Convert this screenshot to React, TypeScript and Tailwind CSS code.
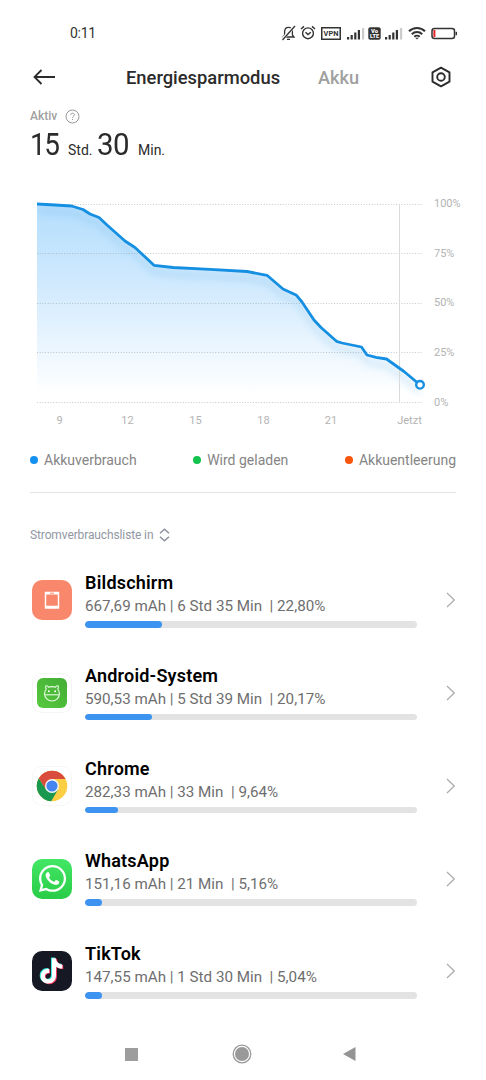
import React from "react";
import { FaWhatsapp } from "react-icons/fa";

const POINTS =
  "37,204 55,205 71.5,206 83,209.5 90,214 99,217.5 107,225 125,241 135,247.5 154,265.3 173,267.5 210,269.3 247,271.5 267,275.3 283,289 296.5,295.3 302,302 314,320 321,327.5 336.5,341.3 342,343 361.5,347 367,355 376,357.3 386.5,359 404,371.5 416,381.5 420,385";

function Signal() {
  return (
    <svg className="h-[13px] w-[18px]" viewBox="0 0 18 13" fill="#333">
      <rect x="0" y="10" width="2.2" height="2.5" />
      <rect x="3.6" y="8" width="2.2" height="4.5" />
      <rect x="7.2" y="5.5" width="2.2" height="7" />
      <rect x="10.8" y="3" width="2.2" height="9.5" />
      <rect x="15" y="1" width="2.2" height="11.5" fill="#ccc" />
    </svg>
  );
}

function StatusBar() {
  return (
    <div className="flex h-[50px] items-center pt-4 pl-[70px]">
      <span className="w-[211px] text-[14px] tracking-[-0.3px] text-[#333]">0:11</span>
      <svg className="h-4 w-[15px]" viewBox="0 0 15 16" fill="none" stroke="#333" strokeWidth="1.3">
        <path d="M2 12h11l-1.6-2V6.8C11.4 4 9.8 2.3 7.5 2.3S3.6 4 3.6 6.8V10zM6 14.3h3" />
        <path d="M13.5 1L1 15" stroke="#fff" strokeWidth="3" />
        <path d="M14 1L1.5 15" />
      </svg>
      <svg className="ml-[4px] h-4 w-4" viewBox="0 0 16 16" fill="none" stroke="#333" strokeWidth="1.4">
        <circle cx="8" cy="8.3" r="5.4" />
        <path d="M1 4L4 1.4M15 4l-3-2.6M5.5 7.2L8 9.6l2.8-2.4" />
      </svg>
      <svg className="ml-[5px] h-[13px] w-5" viewBox="0 0 20 13">
        <rect x="0.75" y="0.75" width="18.5" height="11.5" fill="none" stroke="#333" strokeWidth="1.5" />
        <text x="10" y="9.2" fontSize="7.4" fontWeight="700" fill="#333" textAnchor="middle">VPN</text>
      </svg>
      <span className="ml-[6px]"><Signal /></span>
      <svg className="ml-[3px] h-[13px] w-[13px]" viewBox="0 0 13 13">
        <rect x="0.3" y="0.3" width="12.4" height="12.4" rx="2" fill="#333" />
        <text x="6.5" y="6" fontSize="5.8" fontWeight="900" fill="#fff" textAnchor="middle">Vo</text>
        <text x="6.5" y="11.4" fontSize="5.5" fontWeight="900" fill="#fff" textAnchor="middle">LTE</text>
      </svg>
      <span className="ml-[4px]"><Signal /></span>
      <svg className="ml-[5px] h-[14px] w-[18px]" viewBox="0 0 18 14" fill="none" stroke="#333" strokeWidth="2">
        <path d="M1 5.3a11.4 11.4 0 0 1 16 0M3.8 8.2a7.4 7.4 0 0 1 10.4 0M6.3 10.8a3.9 3.9 0 0 1 5.4 0" />
        <path d="M7.2 11.8h3.6L9 13.6z" fill="#333" stroke="none" />
      </svg>
      <svg className="ml-[5px] h-[13px] w-[27px]" viewBox="0 0 27 13" fill="none">
        <rect x="1" y="1.5" width="22.5" height="10" rx="2.5" stroke="#333" strokeWidth="1.5" />
        <rect x="2.4" y="3" width="2" height="7" fill="#e5252a" />
        <path d="M25.3 4.8v3.4" stroke="#333" strokeWidth="1.5" />
      </svg>
    </div>
  );
}

function Header() {
  return (
    <div className="flex h-[54px] items-center pl-[33px]">
      <svg className="h-4 w-[23px]" viewBox="0 0 23 16" fill="none" stroke="#2b2b2b" strokeWidth="1.8">
        <path d="M22 8H2M8.5 1L1.5 8l7 7" />
      </svg>
      <span className="ml-[70px] w-[192px] pt-[2px] text-[18.35px] font-medium whitespace-nowrap text-[#2b2b2b]">
        Energiesparmodus
      </span>
      <span className="w-[112px] pt-[2px] text-[18.2px] font-medium text-[#a0a0a0]">Akku</span>
      <svg className="h-[22px] w-[22px]" viewBox="0 0 22 22" fill="none" stroke="#2b2b2b" strokeWidth="1.9">
        <path d="M11 1.6l8.5 4.7v9.4L11 20.4l-8.5-4.7V6.3z" strokeLinejoin="round" />
        <circle cx="11" cy="11" r="3.8" />
      </svg>
    </div>
  );
}

function Chart() {
  const rows: [number, string][] = [
    [204, "100%"],
    [253.5, "75%"],
    [303, "50%"],
    [352.5, "25%"],
    [402.5, "0%"],
  ];
  const hours: [number, string][] = [
    [59.5, "9"],
    [127.5, "12"],
    [195.5, "15"],
    [263.5, "18"],
    [331, "21"],
    [409.5, "Jetzt"],
  ];
  return (
    <svg className="mt-[26px] h-[240px] w-[486px] shrink-0" viewBox="0 190 486 240">
      <defs>
        <linearGradient id="area" x1="0" y1="204" x2="0" y2="395" gradientUnits="userSpaceOnUse">
          <stop offset="0" stopColor="#b4defd" />
          <stop offset="0.4" stopColor="#cfe9fe" />
          <stop offset="1" stopColor="#ffffff" />
        </linearGradient>
        <filter id="soft" x="-10%" y="-10%" width="120%" height="130%">
          <feGaussianBlur stdDeviation="3" />
        </filter>
        <clipPath id="under">
          <polygon points={`${POINTS} 430,402 37,402`} />
        </clipPath>
      </defs>
      <polygon points={`${POINTS} 420,395 37,395`} fill="url(#area)" />
      <g clipPath="url(#under)">
        <polyline points={POINTS} transform="translate(0 7)" fill="none" stroke="#4a9fd8" strokeOpacity="0.16" strokeWidth="6" filter="url(#soft)" />
      </g>
      {rows.map(([y, label]) => (
        <g key={label}>
          <path d={`M37 ${Math.floor(y) + 0.5}H422`} stroke="#8c969e" strokeOpacity="0.5" strokeDasharray="1 1.7" />
          <text x="434" y={y + 3} fontSize="11" fill="#b3b3b3">{label}</text>
        </g>
      ))}
      <path d="M399.5 204V403" stroke="#dadada" />
      {hours.map(([x, label]) => (
        <text key={label} x={x} y="423.5" fontSize="11" fill="#b3b3b3" textAnchor="middle">{label}</text>
      ))}
      <polyline points={POINTS} fill="none" stroke="#158fe2" strokeWidth="2.8" strokeLinejoin="round" />
      <circle cx="420" cy="384.8" r="3.8" fill="#fff" stroke="#158fe2" strokeWidth="2.4" />
    </svg>
  );
}

function ScreenIcon() {
  return (
    <svg className="h-10 w-10" viewBox="0 0 40 40">
      <rect width="40" height="40" rx="10" fill="#f9876c" />
      <path d="M12.8 11.8h14.4v17H12.8zM14.2 14.6v11.2h11.6V14.6z" fill="#fff" fillRule="evenodd" />
      <path d="M18 13.2h4" stroke="#f9876c" strokeWidth="1" />
    </svg>
  );
}

function AndroidIcon() {
  return (
    <svg className="h-10 w-10" viewBox="0 0 40 40">
      <defs>
        <linearGradient id="leaf" x1="1" y1="0" x2="0" y2="1">
          <stop offset="0" stopColor="#43ad35" />
          <stop offset="1" stopColor="#57c93e" />
        </linearGradient>
      </defs>
      <rect x="0.5" y="0.5" width="39" height="39" rx="9.5" fill="#fff" stroke="#f5f5f5" />
      <rect x="5" y="5" width="30" height="30" rx="6" fill="url(#leaf)" />
      <g fill="none" stroke="#e9fbe5" strokeWidth="1.1" strokeLinejoin="round">
        <path d="M14.3 16c-1-1.6-.8-2.9-.1-3.2.9-.3 1.9.5 2.3 1.5 2-.8 5-.8 7 0 .4-1 1.4-1.8 2.3-1.5.7.3.9 1.6-.1 3.2 1.1 1.2 1.7 2.9 1.7 4.7 0 4.2-3.3 7.3-7.4 7.3s-7.4-3.1-7.4-7.3c0-1.8.6-3.5 1.7-4.7z" />
        <path d="M12.6 21.8h14.8" />
      </g>
      <circle cx="16.8" cy="18.3" r="1" fill="#fff" />
      <circle cx="23.2" cy="18.3" r="1" fill="#fff" />
    </svg>
  );
}

function ChromeIcon() {
  return (
    <svg className="h-10 w-10" viewBox="0 0 40 40">
      <rect x="0.5" y="0.5" width="39" height="39" rx="9.5" fill="#fff" stroke="#f7f7f7" />
      <circle cx="20" cy="20" r="15.3" fill="#fbce43" />
      <path d="M20 20L20 13H33.6A15.3 15.3 0 0 0 6.75 12.35L13.9 23.5z" fill="#d94b3d" />
      <path d="M6.75 12.35A15.3 15.3 0 0 0 19.2 35.3L26.1 23.5L20 20L13.9 23.5z" fill="#1a9850" />
      <circle cx="20" cy="20" r="7" fill="#f6f9fc" />
      <circle cx="20" cy="20" r="5.6" fill="#4684ef" />
    </svg>
  );
}

function WhatsAppIcon() {
  return (
    <div className="flex h-10 w-10 items-center justify-center rounded-[10px] bg-linear-to-b from-[#42e765] to-[#28cc46]">
      <FaWhatsapp className="h-[31px] w-[31px] text-white" />
    </div>
  );
}

const NOTE =
  "M19.3 6.5h4.2c.3 3.7 2.7 6.2 6.6 6.6v4.3c-2.5 0-4.6-.7-6.500-2v9.300c0 5.200-3.600 8.300-8 8.300-4.600 0-8-3.400-8-7.700 0-4.700 3.900-8.300 8.900-7.700v4.400c-2.500-.6-4.600.9-4.600 3.200 0 2 1.500 3.400 3.500 3.400 2.300 0 3.900-1.500 3.900-4.100z";

function TikTokIcon() {
  return (
    <svg className="h-10 w-10" viewBox="0 0 40 40">
      <rect width="40" height="40" rx="10" fill="#161823" />
      <g transform="translate(1.1 0.8) scale(0.96)">
        <path d={NOTE} transform="translate(-0.7 -0.6)" fill="#31e5df" />
        <path d={NOTE} transform="translate(1.3 0.8)" fill="#f4345c" />
        <path d={NOTE} transform="translate(0.3 0.1)" fill="#fff" />
      </g>
    </svg>
  );
}

const APPS = [
  { name: "Bildschirm", detail: "667,69 mAh | 6 Std 35 Min  | 22,80%", bar: 76.5, icon: <ScreenIcon /> },
  { name: "Android-System", detail: "590,53 mAh | 5 Std 39 Min  | 20,17%", bar: 67, icon: <AndroidIcon /> },
  { name: "Chrome", detail: "282,33 mAh | 33 Min  | 9,64%", bar: 33.3, icon: <ChromeIcon /> },
  { name: "WhatsApp", detail: "151,16 mAh | 21 Min  | 5,16%", bar: 17, icon: <WhatsAppIcon /> },
  { name: "TikTok", detail: "147,55 mAh | 1 Std 30 Min  | 5,04%", bar: 17, icon: <TikTokIcon /> },
];

function Legend({ color, label }: { color: string; label: string }) {
  return (
    <div className="flex items-center gap-[6px]">
      <span className={`h-2 w-2 rounded-full ${color}`} />
      <span className="text-[14px] text-[#858585]">{label}</span>
    </div>
  );
}

export default function App() {
  return (
    <div className="flex h-[1080px] w-[486px] flex-col overflow-hidden bg-white font-['Roboto',sans-serif]">
      <StatusBar />
      <Header />
      <div className="mt-1 flex h-4 items-center pl-[30px]">
        <span className="w-[28px] text-[12px] font-medium text-[#a0a0a0]">Aktiv</span>
        <svg className="ml-[7px] h-[15px] w-[15px]" viewBox="0 0 15 15" fill="none" stroke="#999">
          <circle cx="7.5" cy="7.5" r="6.5" />
          <path d="M5.6 6.1c0-1.2.8-1.9 1.9-1.9s1.9.7 1.9 1.7c0 1.3-1.9 1.5-1.9 2.9M7.5 9.9v1.1" />
        </svg>
      </div>
      <div className="flex h-10 items-baseline pl-[30px] leading-[42px] text-[#2b2b2b]">
        <span className="w-[38px]">
          <span className="inline-block origin-left scale-x-[0.9] text-[31px] tracking-[-1.5px]">15</span>
        </span>
        <span className="w-[29px] text-[14px]">Std.</span>
        <span className="w-[41px]">
          <span className="inline-block origin-left scale-x-[0.95] text-[31px] tracking-[-0.5px]">30</span>
        </span>
        <span className="text-[14px]">Min.</span>
      </div>
      <Chart />
      <div className="mt-5 flex h-5 items-center justify-between pr-[30px] pl-[30px]">
        <Legend color="bg-[#1491f0]" label="Akkuverbrauch" />
        <Legend color="bg-[#14c34d]" label="Wird geladen" />
        <Legend color="bg-[#f9550d]" label="Akkuentleerung" />
      </div>
      <div className="mx-[30px] mt-[22px] h-px shrink-0 bg-[#e2e2e2]" />
      <div className="mt-8 flex h-5 items-center pl-[30px]">
        <span className="text-[12px] tracking-[-0.12px] text-[#9297a3]">Stromverbrauchsliste in</span>
        <svg className="ml-[6px] h-[14px] w-[11px]" viewBox="0 0 11 14" fill="none" stroke="#8c909b" strokeWidth="1.5">
          <path d="M1 5.2L5.5 1.2L10 5.2M1 8.8l4.5 4 4.5-4" />
        </svg>
      </div>
      <div className="mt-[9px] flex flex-col">
        {APPS.map((app) => (
          <div key={app.name} className="flex h-[92.75px] items-center pl-[32px]">
            {app.icon}
            <div className="ml-[13px] flex h-full w-[332px] flex-col pt-4">
              <span className="text-[18px] leading-[25px] font-semibold tracking-[0.2px] text-black">{app.name}</span>
              <span className="mt-[1px] text-[15.2px] leading-5 whitespace-pre text-[#6e6e6e]">{app.detail}</span>
              <div className="mt-[5px] h-[6.5px] overflow-hidden rounded-full bg-[#e3e3e3]">
                <div className="h-full rounded-full bg-[#3d94f0]" style={{ width: app.bar }} />
              </div>
            </div>
            <svg className="ml-[29px] h-4 w-[10px]" viewBox="0 0 10 16" fill="none" stroke="#aaa" strokeWidth="1.2">
              <path d="M1 1l7.3 7L1 15" />
            </svg>
          </div>
        ))}
      </div>
      <div className="flex flex-1 items-center pt-[11px] pl-[125px]">
        <div className="h-[13px] w-[13px] bg-[#9d9d9d]" />
        <svg className="ml-[94px] h-5 w-5" viewBox="0 0 20 20" fill="none">
          <circle cx="10" cy="10" r="8.8" stroke="#999" strokeWidth="1.3" />
          <circle cx="10" cy="10" r="7" fill="#999" />
        </svg>
        <svg className="ml-[91px] h-[14px] w-[13px]" viewBox="0 0 13 14" fill="#949494">
          <path d="M0 7L12.5 0v14z" />
        </svg>
      </div>
    </div>
  );
}
